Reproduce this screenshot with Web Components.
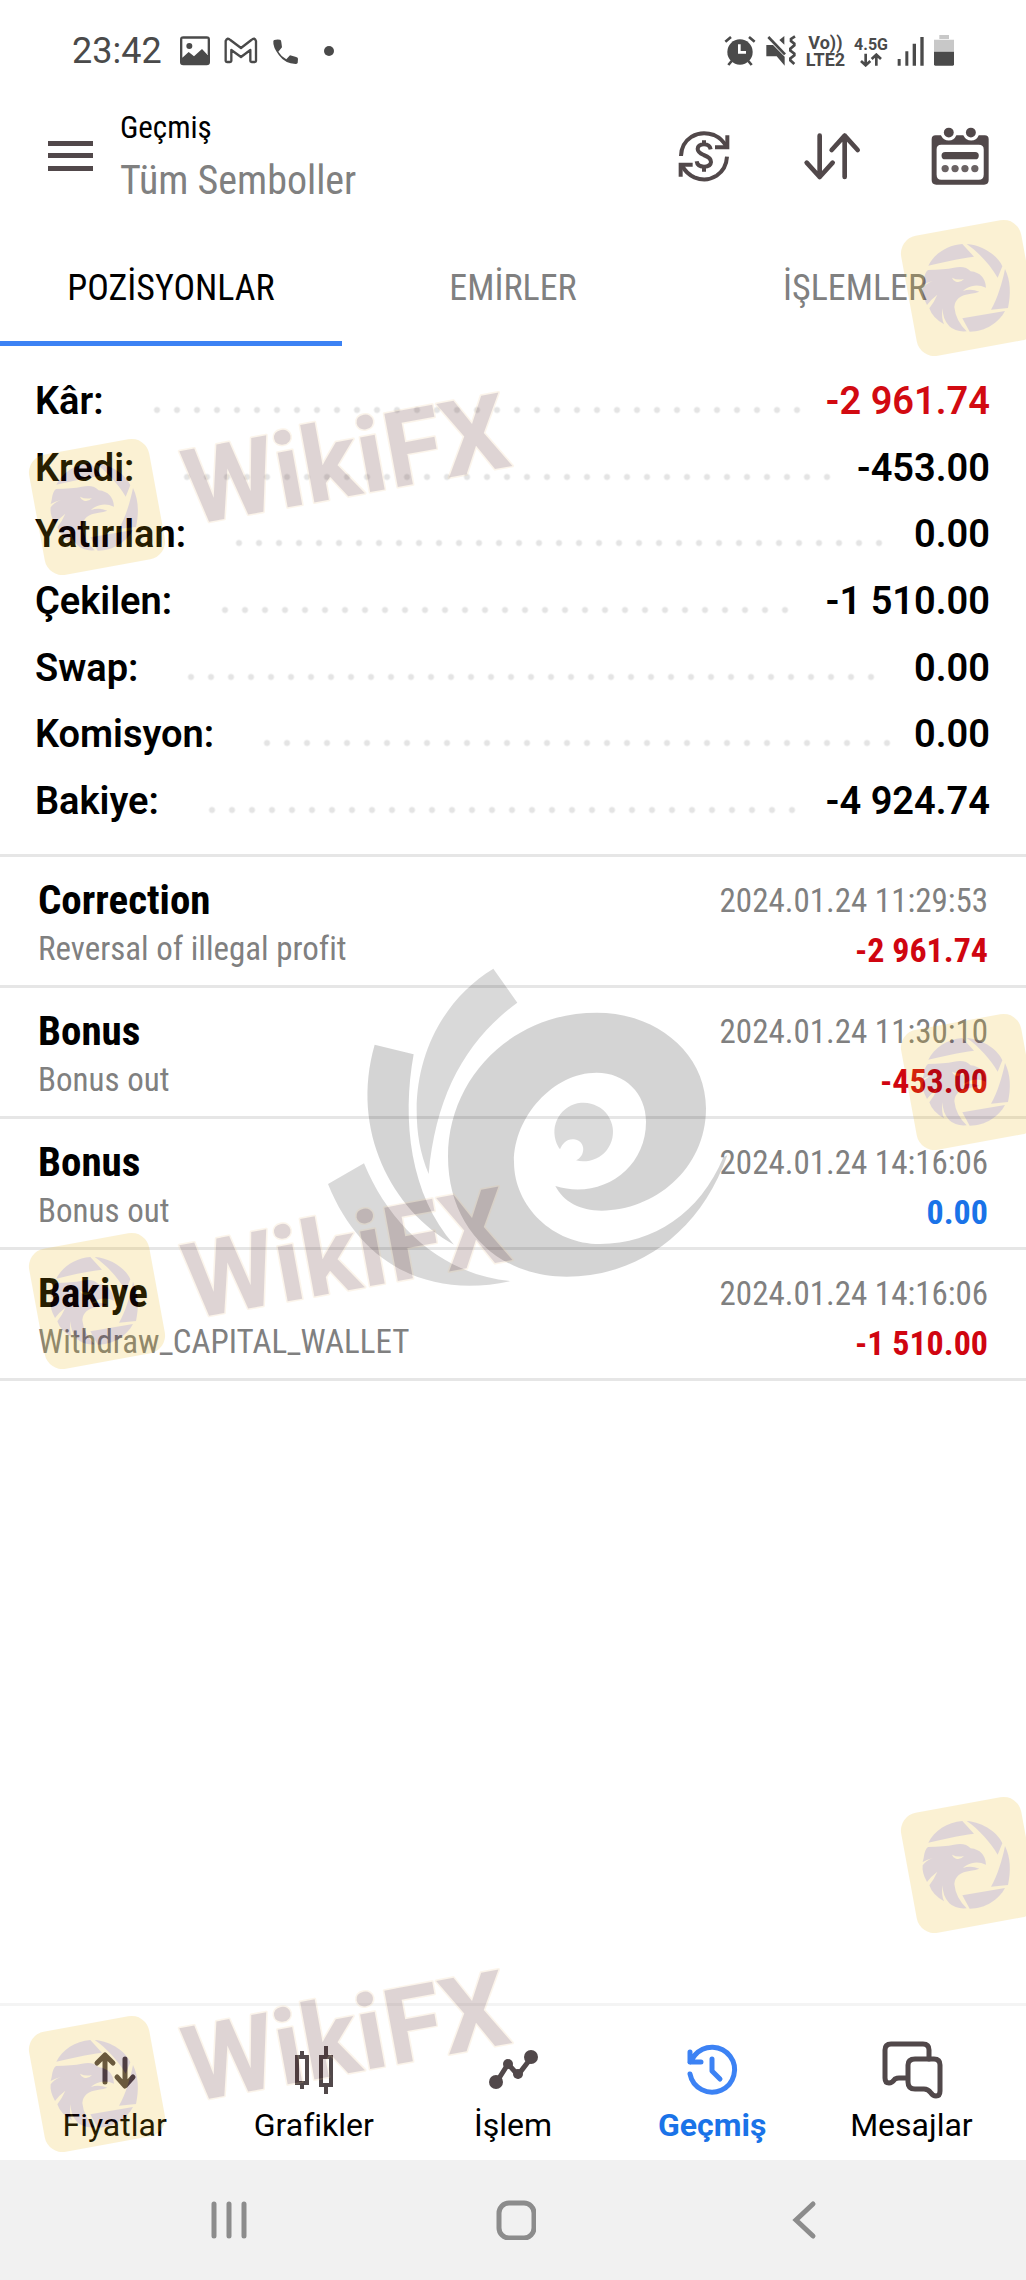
<!DOCTYPE html>
<html lang="tr">
<head>
<meta charset="utf-8">
<meta name="viewport" content="width=device-width, initial-scale=1">
<title>Geçmiş</title>
<style>
body { margin: 0; background: #fff; font-family: Roboto, "Noto Sans", sans-serif; }
</style>
</head>
<body>
<history-app></history-app>
<script>
const CONDENSED = '"Roboto Condensed", "Liberation Sans Narrow", Roboto, sans-serif';

function define(name, html) {
  const tpl = document.createElement('template');
  tpl.innerHTML = html;
  customElements.define(name, class extends HTMLElement {
    constructor() {
      super();
      this.attachShadow({ mode: 'open' }).append(tpl.content.cloneNode(true));
    }
  });
}

define('status-bar', `
<style>
:host { display: flex; align-items: center; justify-content: space-between; height: 102px; padding: 0 72px; color: #4a4a4a; }
div { display: flex; align-items: center; }
.left { gap: 14px; }
.right { gap: 9px; }
time { font-size: 36px; line-height: 40px; padding-right: 4px; }
svg { display: block; }
.net { flex-direction: column; font-size: 18px; line-height: 17px; font-weight: 700; }
.gen { font-size: 16px; }
.dot { width: 10px; height: 10px; border-radius: 50%; background: #4a4a4a; margin-left: 10px; }
</style>
<div class="left">
  <time>23:42</time>
  <svg width="30" height="30" viewBox="538 107 90 90" fill="#4a4a4a"><path fill-rule="evenodd" d="M548 108h70q10 0 10 10v68q0 9-10 9h-70q-10 0-10-9v-68q0-10 10-10zM545 115v57l19-17 16 13 24-22 17 18v-49z"/><circle cx="566" cy="137" r="9"/></svg>
  <svg width="34" height="30" viewBox="666 107 102 90" fill="none" stroke="#4a4a4a" stroke-width="7" stroke-linejoin="round"><path d="M671 182v-60q5-12 14-3l32 24 31-24q10-9 14 3v60q0 3-4 3h-9q-4 0-4-3v-33l-28 21-29-21v33q0 3-4 3h-9q-4 0-4-3z"/></svg>
  <svg width="28" height="30" viewBox="810 107 84 90" fill="#4a4a4a"><path d="M817 119q8-3 17-1 4 1 4 8l2 15-11 13q10 16 24 23l11-12 16 4q8 2 8 6l-1 13q-2 3-6 3-32-1-50-26-19-25-17-42 0-3 3-4z"/></svg>
  <span class="dot"></span>
</div>
<div class="right">
  <svg width="32" height="32" viewBox="318 103 96 96"><circle cx="366" cy="154" r="38" fill="#4a4a4a"/><path d="M322 123l17-14M410 123l-17-14M341 181l-10 12M391 181l10 12" stroke="#4a4a4a" stroke-width="8"/><path d="M364 131v24h20" fill="none" stroke="#fff" stroke-width="8"/></svg>
  <svg width="32" height="32" viewBox="446 103 96 96" fill="#4a4a4a"><path d="M450 133h20l35 35v27l-24-28h-31zM489 118l15-12v26z"/><path d="M456 109l50 52" stroke="#4a4a4a" stroke-width="8"/><path d="M536 107l-12 8 0 6 10 8 0 5-12 10 0 6 12 9 0 5-12 9 0 6 12 11" fill="none" stroke="#4a4a4a" stroke-width="8"/></svg>
  <div class="net"><span>Vo))</span><span>LTE2</span></div>
  <div class="net gen"><span>4.5G</span><svg width="22" height="14" viewBox="716 160 66 42" fill="none" stroke="#4a4a4a" stroke-width="8"><path d="M733 162v34M719 184l14 13 14-13M765 198v-32M751 178l14-13 14 13"/></svg></div>
  <svg width="28" height="32" viewBox="822 103 84 96" fill="#4a4a4a"><path d="M824 175h9v20h-9zM847 152h9v43h-9zM869 129h10v66h-10zM892 109h10v86h-10z"/></svg>
  <svg width="20" height="32" viewBox="941 103 60 96"><path d="M957 103h29v12h-29zM941 117h60v36h-60z" fill="#c8c8c8"/><path d="M941 153h60v38q0 4-4 4h-52q-4 0-4-4z" fill="#4a4a4a"/></svg>
</div>`);

define('app-header', `
<style>
:host { display: flex; align-items: center; height: 108px; padding: 0 37px 20px 48px; font-family: ${CONDENSED}; }
button { border: 0; background: none; padding: 0; display: block; cursor: pointer; }
svg { display: block; }
.titles { flex: 1; padding-left: 27px; }
h1, p { margin: 0; font-weight: 400; }
h1 { font-size: 31px; line-height: 50px; color: #000; }
p { font-size: 40px; line-height: 56px; color: #808080; }
nav { display: flex; gap: 70px; align-items: center; }
</style>
<button aria-label="Menü"><svg width="45" height="30" fill="#51484a"><path d="M0 0h45v5H0zM0 12h45v5H0zM0 25h45v5H0z"/></svg></button>
<div class="titles"><h1>Geçmiş</h1><p>Tüm Semboller</p></div>
<nav>
  <button aria-label="Para birimi"><svg width="58" height="58" viewBox="161 381 174 174" fill="none" stroke="#51484a" stroke-width="12"><path d="M179 468q1-38 32-58 30-18 67-5 25 11 37 35M317 470q-2 37-31 57-31 20-67 5-24-11-36-34"/><path d="M318 406v36h-37M178 530v-36h36"/><path d="M268 448q-3-15-20-15-18 0-19 14 0 10 18 18 22 8 22 21-1 14-21 14-20 0-22-16M248 421v13M248 500v15"/></svg></button>
  <button aria-label="Sırala"><svg width="58" height="58" viewBox="548 381 174 174" fill="none" stroke="#51484a" stroke-width="14" stroke-linecap="round" stroke-linejoin="round"><path d="M598 407v124M559 488l39 43 39-43M673 531V407M634 450l39-43 39 43"/></svg></button>
  <button aria-label="Tarih"><svg width="58" height="58" viewBox="932 377 174 176" fill="#51484a"><path fill-rule="evenodd" d="M945 402h16q8 16 24 16t23-16h21q8 16 24 16t23-16h18q12 0 12 12v124q0 14-14 14H947q-14 0-14-14V414q0-12 12-12zM962 431q-14 0-14 14v76q0 16 14 16h114q15 0 15-16v-76q0-14-15-14z"/><circle cx="985" cy="394" r="15"/><circle cx="1052" cy="394" r="15"/><rect x="963" y="453" width="113" height="22" rx="11"/><g opacity=".85"><circle cx="974" cy="503" r="11"/><circle cx="1004" cy="503" r="11"/><circle cx="1034" cy="503" r="11"/><circle cx="1064" cy="503" r="11"/></g></svg></button>
</nav>`);

define('tab-strip', `
<style>
:host { display: flex; height: 116px; font-family: ${CONDENSED}; }
button { flex: 1; border: 0; border-bottom: 5px solid transparent; padding: 5px 0 0; background: none; font: inherit; font-size: 36px; line-height: 44px; color: #808080; }
button[aria-selected=true] { color: #000; border-color: #3c82f4; }
</style>
<button role="tab" aria-selected="true">POZİSYONLAR</button>
<button role="tab" aria-selected="false">EMİRLER</button>
<button role="tab" aria-selected="false">İŞLEMLER</button>`);

define('summary-row', `
<style>
:host { display: flex; align-items: center; font-size: 38px; line-height: 44px; font-weight: 600; color: #000; }
:host([negative]) .value { color: #d20a11; }
.leader { flex: 1; margin: 18px 14px 0 43px; display: grid; grid-template-columns: repeat(auto-fill, 20px); }
.leader i { grid-column: 1 / -1; height: 8px; background: radial-gradient(circle at 10px 4px, #e4e4e4 2px, transparent 4px) 0 0 / 20px 8px; }
</style>
<span><slot name="label"></slot></span><span class="leader"><i></i></span><span class="value"><slot></slot></span>`);

define('account-summary', `
<style>
:host { display: grid; grid-template-rows: repeat(7, 1fr); height: 466px; padding: 22px 36px 20px 35px; border-bottom: 3px solid #e6e6e6; }
</style>
<slot></slot>`);

define('deal-item', `
<style>
:host { display: flex; justify-content: space-between; height: 128px; border-bottom: 3px solid #e6e6e6; padding: 0 38px; font-family: ${CONDENSED}; font-size: 34px; color: #808080; }
div { display: flex; flex-direction: column; padding-top: 18px; }
.right { align-items: flex-end; }
h2 { margin: 0; font-size: 41px; line-height: 50px; font-weight: 700; color: #000; }
time { font-size: 33px; line-height: 52px; }
p { margin: 0; font-size: 33px; line-height: 48px; }
b { line-height: 46px; color: #d00510; }
:host([neutral]) b { color: #1a73e8; }
</style>
<div><h2><slot name="title"></slot></h2><p><slot name="comment"></slot></p></div>
<div class="right"><time><slot name="time"></slot></time><b><slot name="amount"></slot></b></div>`);

define('nav-item', `
<style>
:host { display: block; flex: 1; }
a { display: flex; flex-direction: column; align-items: center; color: #000; text-decoration: none; font-size: 32px; line-height: 36px; }
:host([active]) a { color: #1a73e8; font-weight: 700; }
::slotted(svg) { display: block; margin-bottom: 7px; }
</style>
<a href="#"><slot name="icon"></slot><span><slot></slot></span></a>`);

define('bottom-nav', `
<style>
:host { display: flex; height: 120px; padding: 34px 15px 0; border-top: 3px solid #f4f4f4; }
</style>
<nav-item><svg slot="icon" width="60" height="60" viewBox="0 0 60 60" fill="none" stroke="#51484a" stroke-width="5" stroke-linecap="round" stroke-linejoin="round"><path d="M20 42V15M12 23l8-8 8 8M40 19v26M32 37l8 9 8-9"/></svg>Fiyatlar</nav-item>
<nav-item><svg slot="icon" width="60" height="60" viewBox="0 0 60 60" fill="none" stroke="#51484a" stroke-width="4"><path d="M13 17h10v26H13zM18 11v6M18 43v6M37 17h10v28H37zM42 6v11M42 45v9"/></svg>Grafikler</nav-item>
<nav-item><svg slot="icon" width="60" height="60" viewBox="0 0 60 60" fill="#51484a"><path d="M13 43l12-19 10 11 13-17" fill="none" stroke="#51484a" stroke-width="5"/><circle cx="13" cy="42" r="7"/><circle cx="25" cy="24" r="5"/><circle cx="35" cy="34" r="5"/><circle cx="48" cy="17" r="7"/></svg>İşlem</nav-item>
<nav-item active><svg slot="icon" width="60" height="60" viewBox="0 0 60 60" fill="none" stroke="#3c82f4" stroke-width="5" stroke-linecap="round" stroke-linejoin="round"><path d="M8 34A22.500 22.500 0 1 0 13 15L8 22M8 12v10h11M30 19v12l8 8"/></svg>Geçmiş</nav-item>
<nav-item><svg slot="icon" width="64" height="60" viewBox="0 0 64 60" fill="none" stroke="#51484a" stroke-width="5" stroke-linejoin="round" stroke-linecap="round"><path d="M50 19V10q0-6-6-6H12Q6 4 6 10v28q0 5 4 5 3 0 6-4 2-1 4-1h8"/><path d="M36 19h19q6 0 6 6v26q0 5-4 5-3 0-5-3-3-4-7-4h-9q-7 0-7-7V25q0-6 7-6z"/></svg>Mesajlar</nav-item>`);

define('system-nav', `
<style>
:host { display: flex; align-items: center; height: 120px; padding: 0 80px 0 85px; background: #f1f1f1; }
button { flex: 1; display: flex; justify-content: center; border: 0; background: none; padding: 0; }
</style>
<button aria-label="Son uygulamalar"><svg width="40" height="40" fill="none" stroke="#8c8c8c" stroke-width="5" stroke-linecap="round"><path d="M5 4v32M20 4v32M35 4v32"/></svg></button>
<button aria-label="Ana ekran"><svg width="40" height="40" fill="none" stroke="#8c8c8c" stroke-width="5"><rect x="3" y="3" width="35" height="35" rx="10"/></svg></button>
<button aria-label="Geri"><svg width="40" height="40" fill="none" stroke="#8c8c8c" stroke-width="5" stroke-linecap="round"><path d="M30 4L13 20l17 16"/></svg></button>`);

define('eagle-tile', `
<style>
:host { display: block; width: 146px; height: 146px; }
svg { display: block; opacity: .17; }
</style>
<svg width="146" height="146" viewBox="51 38 438 438" fill="#420a1c">
  <rect x="87" y="74" width="366" height="366" rx="54" fill="#e8b000" transform="rotate(-10.400 270 257)"/>
  <path d="M148 190C165 155 205 128 250 125L285 163C240 168 190 180 148 190z"/>
  <path d="M263 125C315 128 360 165 370 192L356 226C335 190 300 150 263 125z"/>
  <path d="M378 200C395 235 396 275 387 317L336 322C355 290 370 240 378 200z"/>
  <path d="M250 348L378 326C360 360 320 388 272 388z"/>
  <path d="M134 236Q137 210 147 203Q195 202 225 196Q258 188 275 207Q318 212 321 256Q298 246 278 252Q258 258 252 266Q275 258 301 268Q290 273 275 274Q228 280 226 314Q230 355 263 387Q230 390 211 372Q190 350 191 318Q186 345 195 366Q160 346 151 318Q165 300 175 277Q155 292 144 308Q128 280 131 258Q140 245 161 236Q145 240 131 248z"/>
  <path d="M219 226Q236 235 255 230Q245 242 231 238Q222 236 219 226z" fill="#e8b000"/>
</svg>`);

define('brand-stamp', `
<style>
:host { position: absolute; left: 0; right: 0; height: 360px; pointer-events: none; }
.tile, .tile-right, svg { position: absolute; }
.tile { left: 24px; top: 219px; }
.tile-right { left: calc(100% - 130px); top: 0; }
svg { left: 160px; top: 160px; opacity: .17; overflow: visible; }
text { font: 700 105px Roboto, sans-serif; fill: #420a0a; stroke: #f0c890; stroke-width: 3px; paint-order: stroke; stroke-linejoin: round; }
</style>
<eagle-tile class="tile-right"></eagle-tile>
<eagle-tile class="tile"></eagle-tile>
<svg width="360" height="170" aria-hidden="true"><text transform="translate(31 150) rotate(-10.400)">WikiFX</text></svg>`);

define('swirl-mark', `
<style>
:host { position: absolute; top: 940px; left: calc(50% - 213px); pointer-events: none; }
svg { display: block; }
</style>
<svg width="440" height="380" viewBox="0 0 1320 1140" fill="#000" fill-opacity=".17">
  <path fill-opacity=".15" d="M580 86L652 188C500 300 408 460 386 702C360 640 350 580 350 510C350 330 440 170 580 86z"/>
  <path d="M224 314L341 343C305 540 330 765 462 914C275 810 150 570 224 314z"/>
  <path fill-opacity=".15" d="M84 732L192 670C270 860 430 1005 632 1023C400 1075 185 985 84 732z"/>
  <path d="M890 218C1070 218 1218 340 1218 505C1218 690 1060 812 905 812C840 812 790 785 766 738C900 780 1038 690 1038 545C1038 460 975 398 890 398C760 398 642 530 642 665C642 800 760 912 900 912C1060 912 1200 820 1270 652L1282 646C1200 880 1010 1010 800 1010C590 1010 444 860 444 650C444 410 640 218 890 218z"/>
  <path fill-opacity=".14" d="M780 628A88 88 0 1 1 828 661C856 650 860 604 822 598C800 596 788 610 780 628z"/>
</svg>`);

define('history-app', `
<style>
:host { display: flex; flex-direction: column; min-height: 100vh; position: relative; overflow: hidden; background: #fff; }
main { flex: 1; }
</style>
<status-bar></status-bar>
<app-header></app-header>
<tab-strip role="tablist"></tab-strip>
<main>
  <account-summary>
    <summary-row negative><span slot="label">Kâr:</span>-2 961.74</summary-row>
    <summary-row><span slot="label">Kredi:</span>-453.00</summary-row>
    <summary-row><span slot="label">Yatırılan:</span>0.00</summary-row>
    <summary-row><span slot="label">Çekilen:</span>-1 510.00</summary-row>
    <summary-row><span slot="label">Swap:</span>0.00</summary-row>
    <summary-row><span slot="label">Komisyon:</span>0.00</summary-row>
    <summary-row><span slot="label">Bakiye:</span>-4 924.74</summary-row>
  </account-summary>
  <deal-item><span slot="title">Correction</span><span slot="comment">Reversal of illegal profit</span><span slot="time">2024.01.24 11:29:53</span><span slot="amount">-2 961.74</span></deal-item>
  <deal-item><span slot="title">Bonus</span><span slot="comment">Bonus out</span><span slot="time">2024.01.24 11:30:10</span><span slot="amount">-453.00</span></deal-item>
  <deal-item neutral><span slot="title">Bonus</span><span slot="comment">Bonus out</span><span slot="time">2024.01.24 14:16:06</span><span slot="amount">0.00</span></deal-item>
  <deal-item><span slot="title">Bakiye</span><span slot="comment">Withdraw_CAPITAL_WALLET</span><span slot="time">2024.01.24 14:16:06</span><span slot="amount">-1 510.00</span></deal-item>
</main>
<bottom-nav></bottom-nav>
<system-nav></system-nav>
<swirl-mark></swirl-mark>
<brand-stamp style="top:215px"></brand-stamp>
<brand-stamp style="top:1009px"></brand-stamp>
<brand-stamp style="top:1792px"></brand-stamp>`);
</script>
</body>
</html>
